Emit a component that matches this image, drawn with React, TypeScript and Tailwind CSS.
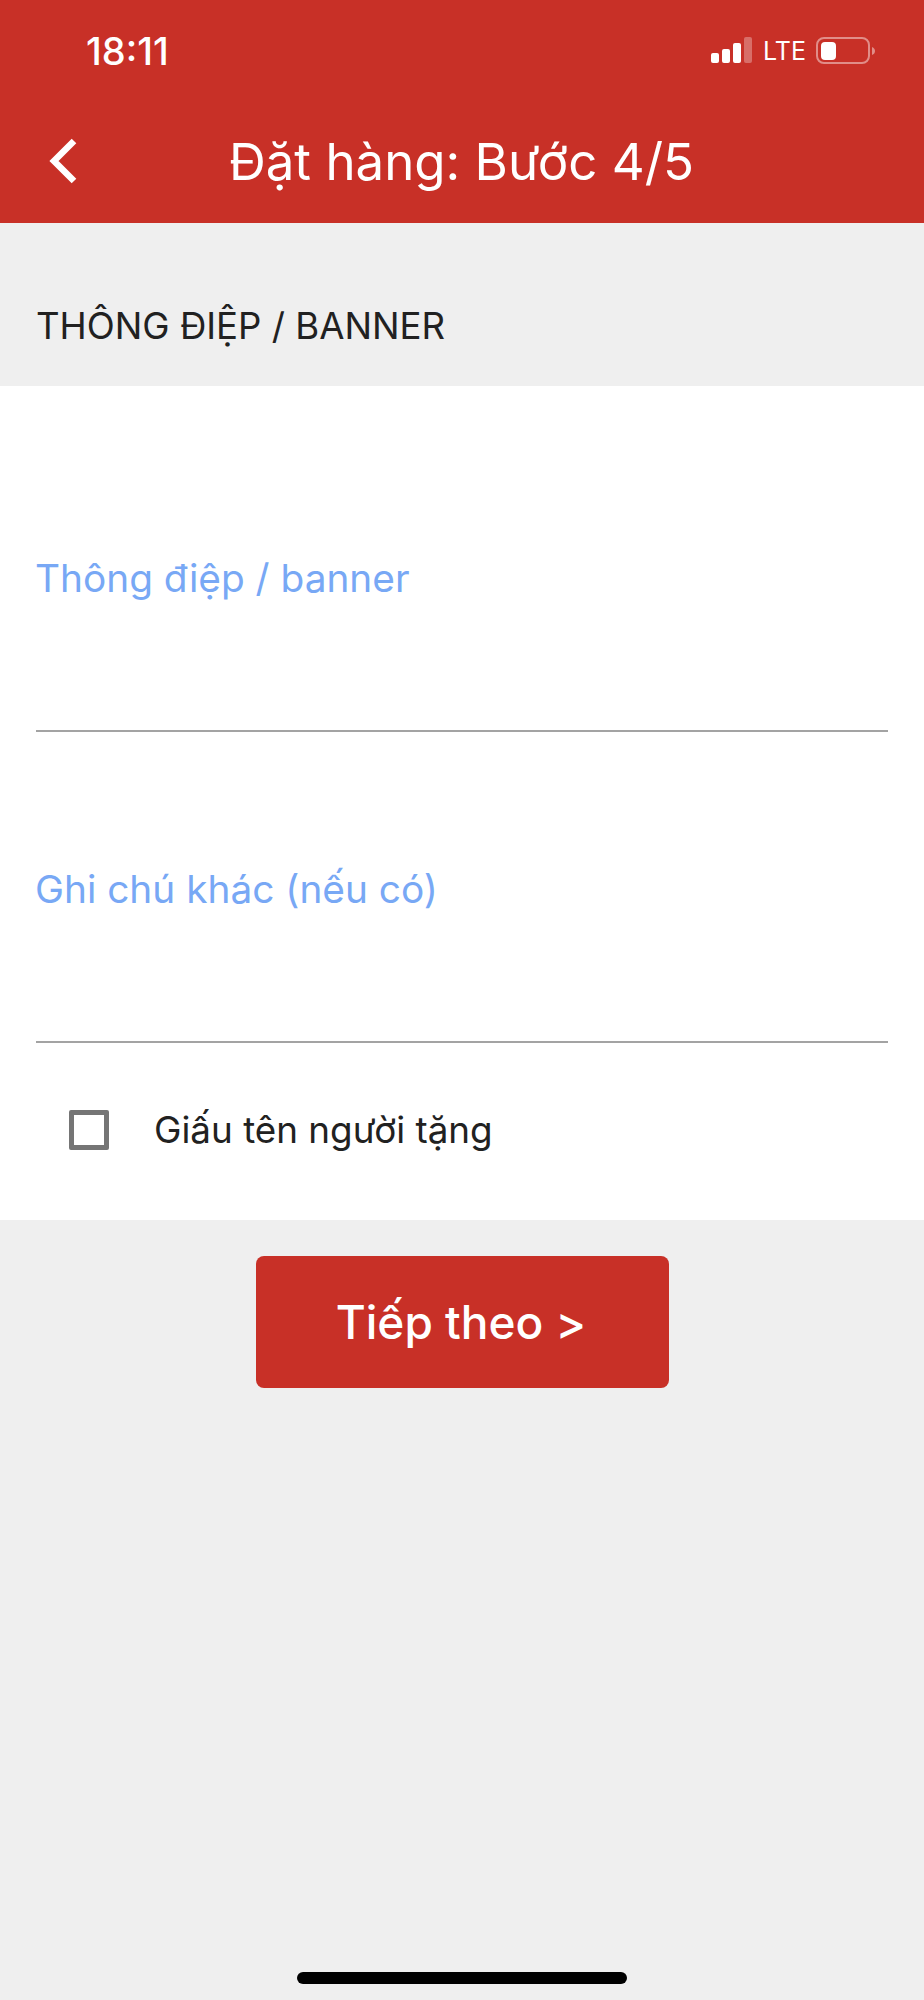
const inter = "font-['Inter','Noto_Sans',sans-serif]";

function StatusIcons() {
    return (
        <div className="flex items-center">
            <svg width="41" height="27" viewBox="0 0 41 27" fill="white">
                <rect x="0" y="16" width="8" height="10" rx="2" />
                <rect x="11" y="12" width="8" height="14" rx="2" />
                <rect x="22" y="6" width="8" height="20" rx="2" />
                <rect x="33" y="0" width="8" height="26" rx="2" fillOpacity="0.3" />
            </svg>
            <span className="ml-[11px] pt-[2px] text-[25px] leading-[27px] text-white">LTE</span>
            <svg className="ml-[10px]" width="60" height="28" viewBox="0 0 60 28" fill="none">
                <rect x="1" y="1" width="52" height="25" rx="7" stroke="white" strokeOpacity="0.45" strokeWidth="2" />
                <rect x="5" y="5" width="15" height="18" rx="4" fill="white" />
                <path d="M56 10 C58 11 59 12 59 14 C59 16 58 17 56 18 Z" fill="white" fillOpacity="0.45" />
            </svg>
        </div>
    );
}

function Field({ label }: { label: string }) {
    return (
        <div className="h-[311px] flex flex-col justify-end">
            <div className="-ml-[1px] text-[38.8px] leading-[56px] text-[#78A8F5] mb-[124px]">{label}</div>
            <div className="h-[2px] bg-[#A3A3A3]" />
        </div>
    );
}

export default function App() {
    return (
        <div className={`${inter} min-h-[2000px] flex flex-col bg-[#EFEFEF]`}>
            <header className="h-[223px] bg-[#C83027] text-white">
                <div className="flex items-center justify-between pt-[35px] pl-[86px] pr-[48px] h-[66px]">
                    <span className="text-[38px] leading-[36px] font-medium">18:11</span>
                    <StatusIcons />
                </div>
                <div className="relative flex items-center justify-center h-[118px] pt-[74px]">
                    <svg className="absolute left-[48px] top-[72px]" width="30" height="46" viewBox="0 0 30 46" fill="none">
                        <path d="M26 3 L6 23 L26 43" stroke="white" strokeWidth="6.5" />
                    </svg>
                    <h1 className="text-[51px] leading-[60px] font-normal pr-[1px]">Đặt hàng: Bước 4/5</h1>
                </div>
            </header>

            <div className="h-[163px] flex items-center pl-[36px] pt-[44px] text-[36.6px] text-[#212121]">THÔNG ĐIỆP / BANNER</div>

            <main className="bg-white h-[834px] px-[36px]">
                <div className="pt-[35px]">
                    <Field label="Thông điệp / banner" />
                    <Field label="Ghi chú khác (nếu có)" />
                </div>
                <div className="flex items-center h-[88px] mt-[43px] pl-[33px]">
                    <div className="w-[40px] h-[40px] border-[5px] border-[#757575] rounded-[2px]" />
                    <span className="ml-[45px] text-[36.8px] text-[#212121]">Giấu tên người tặng</span>
                </div>
            </main>

            <div className="flex justify-center pt-[36px]">
                <button className="w-[413px] h-[132px] rounded-[8px] bg-[#C83027] text-white text-[46px] font-medium pr-[2px]">Tiếp theo &gt;</button>
            </div>

            <div className="mt-auto mb-[16px] mx-auto w-[330px] h-[12px] rounded-full bg-black" />
        </div>
    );
}
